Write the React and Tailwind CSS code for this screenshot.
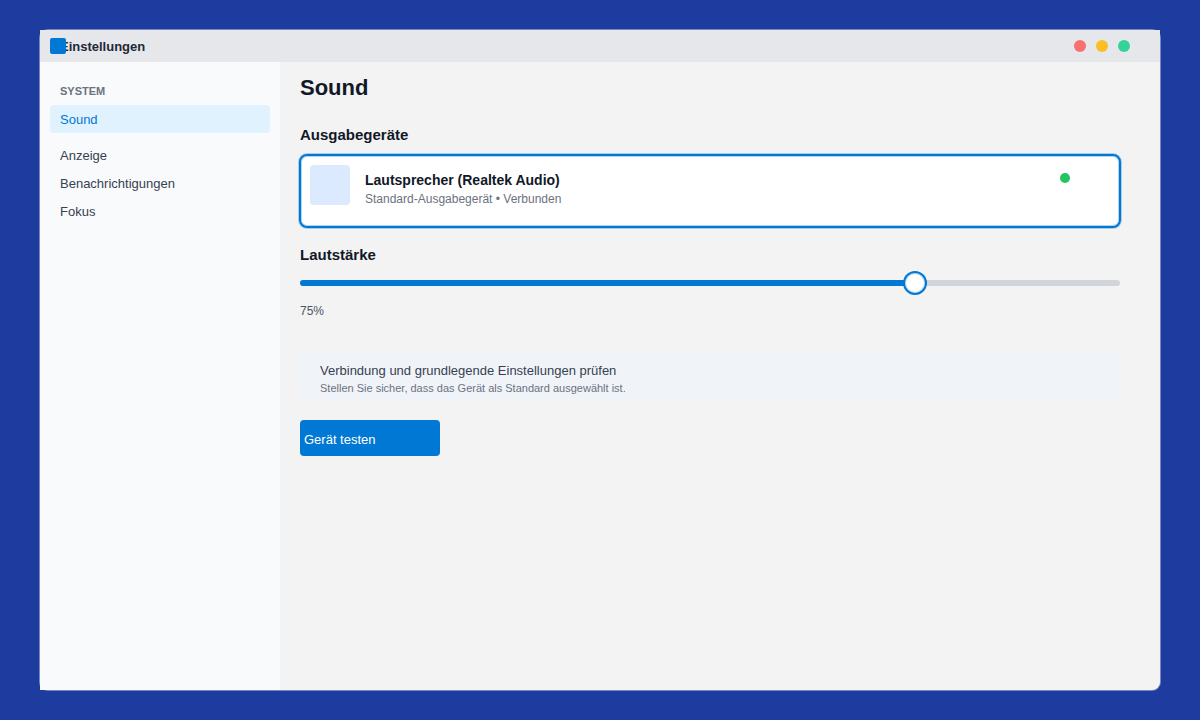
import { useState } from "react";

const navItems = ["Anzeige", "Benachrichtigungen", "Fokus"];

function TitleBar() {
  return (
    <header className="flex h-8 items-center bg-[#e5e7eb] pl-[10px] pr-[30px]">
      <span className="z-10 -mr-[6px] size-4 rounded-[2px] bg-[#0078d4]" aria-hidden="true" />
      <span className="pt-[2px] text-[13px] leading-[18px] font-bold text-[#1f2937]">Einstellungen</span>
      <div className="ml-auto flex gap-[10px]">
        <button type="button" aria-label="Schließen" className="size-3 rounded-full bg-[#f87171]" />
        <button type="button" aria-label="Minimieren" className="size-3 rounded-full bg-[#fbbf24]" />
        <button type="button" aria-label="Maximieren" className="size-3 rounded-full bg-[#34d399]" />
      </div>
    </header>
  );
}

function Sidebar() {
  return (
    <nav className="w-60 shrink-0 bg-[#f9fafb] px-[10px] pt-[21px] text-[13px] leading-[26px] text-[#374151]">
      <h2 className="mb-[6px] px-[10px] text-[11px] leading-4 font-bold text-[#6b7280]">SYSTEM</h2>
      <a href="#sound" aria-current="page" className="mb-2 block rounded-[4px] bg-[#e0f2fe] px-[10px] pt-[2px] text-[#0078d4]">
        Sound
      </a>
      {navItems.map((label) => (
        <a key={label} href={"#" + label.toLowerCase()} className="block px-[10px] pt-[2px]">
          {label}
        </a>
      ))}
    </nav>
  );
}

function DeviceCard() {
  return (
    <div className="-mx-px mt-[9px] flex min-h-[74px] items-start rounded-[8px] border-2 border-[#0078d4] bg-white pt-[9px] pr-[49px] pl-[9px] shadow-[0_0_0_1px_rgba(0,120,212,0.3),inset_0_0_0_1px_rgba(0,120,212,0.3)]">
      <div className="size-10 rounded-[4px] bg-[#dbeafe]" />
      <div className="ml-[15px] pt-[6px]">
        <h3 className="text-[14px] leading-[18px] font-bold text-[#111827]">Lautsprecher (Realtek Audio)</h3>
        <p className="mt-[2px] text-[12px] leading-4 text-[#6b7280]">Standard-Ausgabegerät • Verbunden</p>
      </div>
      <span className="mt-2 ml-auto size-[10px] rounded-full bg-[#22c55e]" />
    </div>
  );
}

function VolumeSlider() {
  const [volume, setVolume] = useState(75);
  return (
    <>
      <label htmlFor="volume" className="mt-[17px] block text-[15px] leading-5 font-bold text-[#111827]">
        Lautstärke
      </label>
      <div className="relative mt-[15px] h-[6px] rounded-full bg-[#d1d5db]">
        <div className="h-full rounded-l-full bg-[#0078d4]" style={{ width: volume + "%" }} />
        <input
          id="volume"
          type="range"
          min="0"
          max="100"
          value={volume}
          onChange={(e) => setVolume(Number(e.target.value))}
          className="absolute -inset-x-3 -top-[9px] h-6 w-[calc(100%+24px)] appearance-none bg-transparent [&::-webkit-slider-thumb]:size-6 [&::-webkit-slider-thumb]:appearance-none [&::-webkit-slider-thumb]:rounded-full [&::-webkit-slider-thumb]:border-2 [&::-webkit-slider-thumb]:border-[#0078d4] [&::-webkit-slider-thumb]:bg-white [&::-webkit-slider-thumb]:shadow-[inset_0_0_0_1px_rgba(0,120,212,0.3)]"
        />
      </div>
      <output htmlFor="volume" className="mt-[17px] block text-[12px] leading-4 text-[#4b5563]">
        {volume}%
      </output>
    </>
  );
}

export default function App() {
  return (
    <div className="flex min-h-screen flex-col bg-[#1e3c9f] px-10 py-[30px] font-[Helvetica,'Liberation_Sans',Arial,sans-serif]">
      <div className="flex grow flex-col rounded-[8px] bg-[#f3f3f3] shadow-[0_0_0_1px_rgba(209,213,219,0.5)]">
        <TitleBar />
        <div className="flex grow">
          <Sidebar />
          <main className="min-w-0 grow pt-3 pr-10 pb-5 pl-5">
            <h1 className="text-[22px] leading-7 font-bold text-[#111827]">Sound</h1>
            <h2 className="mt-[23px] text-[15px] leading-5 font-bold text-[#111827]">Ausgabegeräte</h2>
            <DeviceCard />
            <VolumeSlider />
            <div className="mt-[31px] rounded-[4px] bg-[#f0f4f9] px-5 pt-3 pb-1">
              <p className="text-[13px] leading-[18px] text-[#374151]">
                Verbindung und grundlegende Einstellungen prüfen
              </p>
              <p className="text-[11px] leading-4 text-[#6b7280]">
                Stellen Sie sicher, dass das Gerät als Standard ausgewählt ist.
              </p>
            </div>
            <button
              type="button"
              className="mt-5 block h-9 w-[140px] rounded-[4px] bg-[#0078d4] px-1 pt-[3px] text-left text-[13px] leading-[18px] text-white"
            >
              Gerät testen
            </button>
          </main>
        </div>
      </div>
    </div>
  );
}
